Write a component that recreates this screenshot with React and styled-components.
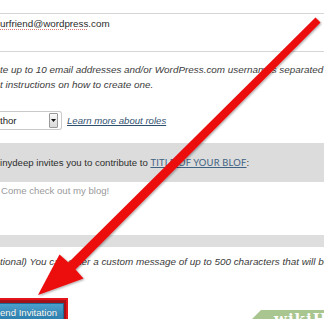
import React from 'react';
import styled, { createGlobalStyle } from 'styled-components';

const GlobalStyle = createGlobalStyle`
  html, body {
    margin: 0;
    padding: 0;
    background: #fff;
  }
  body {
    font-family: "Liberation Sans", Arial, sans-serif;
    color: #333;
    overflow: hidden;
  }
`;

const Page = styled.div`
  position: relative;
  width: 324px;
  height: 319px;
  overflow: hidden;
  padding-top: 13px;
  box-sizing: border-box;
  font-size: 9.6px;
`;

const EmailBox = styled.div`
  height: 39px;
  border-top: 1px solid #d6d6d6;
  border-bottom: 1px solid #d6d6d6;
  padding-top: 3px;
  line-height: 14px;
  font-size: 9.8px;
  color: #2b2b2b;
  white-space: nowrap;
  box-sizing: border-box;
`;

const Squiggle = styled.span`
  text-decoration: underline dotted #d77;
  text-decoration-thickness: 1px;
  text-underline-offset: 2px;
`;

const Note = styled.p`
  margin: ${(p) => p.$top}px 0 0;
  font-style: italic;
  font-size: 9.9px;
  line-height: 15px;
  color: #3c3c3c;
  white-space: nowrap;
`;

const RoleRow = styled.div`
  display: flex;
  align-items: center;
  gap: 5px;
  margin-top: 18px;
  height: 20px;
`;

const Select = styled.div`
  display: flex;
  align-items: center;
  justify-content: space-between;
  width: 62px;
  height: 19px;
  box-sizing: border-box;
  border: 1px solid #c9c9c9;
  border-left: none;
  border-radius: 0 3px 3px 0;
  padding: 0 3px 0 0;
  color: #222;
`;

const DropButton = styled.span`
  display: flex;
  align-items: center;
  justify-content: center;
  width: 9px;
  height: 15px;
  box-sizing: border-box;
  border: 1px solid #9a9a9a;
  border-radius: 1px;
  background: linear-gradient(#fafafa, #d8d8d8);
`;

const RoleLink = styled.a`
  color: #2f4f6f;
  font-style: italic;
  text-decoration: underline;
`;

const InviteBand = styled.div`
  margin-top: 13px;
  height: 39px;
  line-height: 39px;
  background: #dcdcdc;
  white-space: nowrap;
  color: #2e2e2e;
`;

const BlogLink = styled.a`
  font-family: Lato, "Open Sans", sans-serif;
  font-size: 9.4px;
  letter-spacing: 0.2px;
  color: #3f6282;
  text-decoration: underline;
`;

const MessageBox = styled.div`
  height: 53px;
  padding: 2px 0 0 1px;
  box-sizing: border-box;
  line-height: 14px;
  color: #9a9a9a;
`;

const GreyStrip = styled.div`
  height: 12px;
  background: #dedede;
`;

const Optional = styled.p`
  margin: 8px 0 0;
  line-height: 14px;
  font-style: italic;
  font-size: 9.9px;
  color: #3a3a3a;
  white-space: nowrap;
`;

const ButtonFrame = styled.div`
  margin-top: 29px;
  width: 68px;
  height: 26px;
  box-sizing: border-box;
  border: 2px solid #e4141b;
  border-left: none;
  padding: 3px 2px 0 0;
  background: #a31218;
`;

const SendButton = styled.div`
  height: 100%;
  box-sizing: border-box;
  border: 1px solid #1d6790;
  border-left: none;
  background: linear-gradient(#4a9fcc, #2a7cab);
  color: #fff;
  font-size: 9.6px;
  line-height: 15px;
  white-space: nowrap;
  padding-top: 1px;
  text-shadow: 0 0 1px rgba(0, 0, 0, 0.3);
`;

const Overlay = styled.svg`
  position: absolute;
  left: 0;
  top: 0;
  width: 324px;
  height: 319px;
  pointer-events: none;
`;

const Watermark = styled.div`
  position: absolute;
  right: 0;
  bottom: 0;
  width: 72px;
  height: 9px;
  background: #a9c690;
  clip-path: polygon(9px 0, 100% 0, 100% 100%, 0 100%);
  overflow: hidden;
  color: #fff;
  font-family: "DejaVu Serif", serif;
  font-weight: bold;
  font-size: 15px;
  line-height: 15px;
  padding-left: 22px;
  box-sizing: border-box;
  padding-top: 2px;
  letter-spacing: 1px;
`;

function Arrow() {
  const pts = [
    [315.5, 17.5],
    [320.5, 22.5],
    [75.5, 269.5],
    [83.5, 278.5],
    [38, 295],
    [59.5, 254.5],
    [68.5, 262.5],
  ]
    .map((p) => p.join(','))
    .join(' ');
  return (
    <Overlay viewBox="0 0 324 319">
      <defs>
        <filter id="shadow" x="-10%" y="-10%" width="120%" height="120%">
          <feDropShadow dx="1" dy="1" stdDeviation="0.8" floodColor="#000" floodOpacity="0.35" />
        </filter>
      </defs>
      <polygon points={pts} fill="#ec0a0f" filter="url(#shadow)" />
    </Overlay>
  );
}

export default function App() {
  return (
    <>
      <GlobalStyle />
      <Page>
        <EmailBox>
          <Squiggle>urfriend@wordpress</Squiggle>.com
        </EmailBox>
        <Note $top={10}>
          te up to 10 email addresses and/or WordPress.com usernames separated by commas.
          <br />
          t instructions on how to create one.
        </Note>
        <RoleRow>
          <Select>
            thor
            <DropButton>
              <svg width="5" height="3" viewBox="0 0 5 3">
                <path d="M0 0H5L2.5 3Z" fill="#111" />
              </svg>
            </DropButton>
          </Select>
          <RoleLink>Learn more about roles</RoleLink>
        </RoleRow>
        <InviteBand>
          inydeep invites you to contribute to <BlogLink>TITLE OF YOUR BLOF</BlogLink>:
        </InviteBand>
        <MessageBox>Come check out my blog!</MessageBox>
        <GreyStrip />
        <Optional>
          tional) You can enter a custom message of up to 500 characters that will be included in the invitation.
        </Optional>
        <ButtonFrame>
          <SendButton>end Invitation</SendButton>
        </ButtonFrame>
        <Arrow />
        <Watermark>wikiHow</Watermark>
      </Page>
    </>
  );
}
